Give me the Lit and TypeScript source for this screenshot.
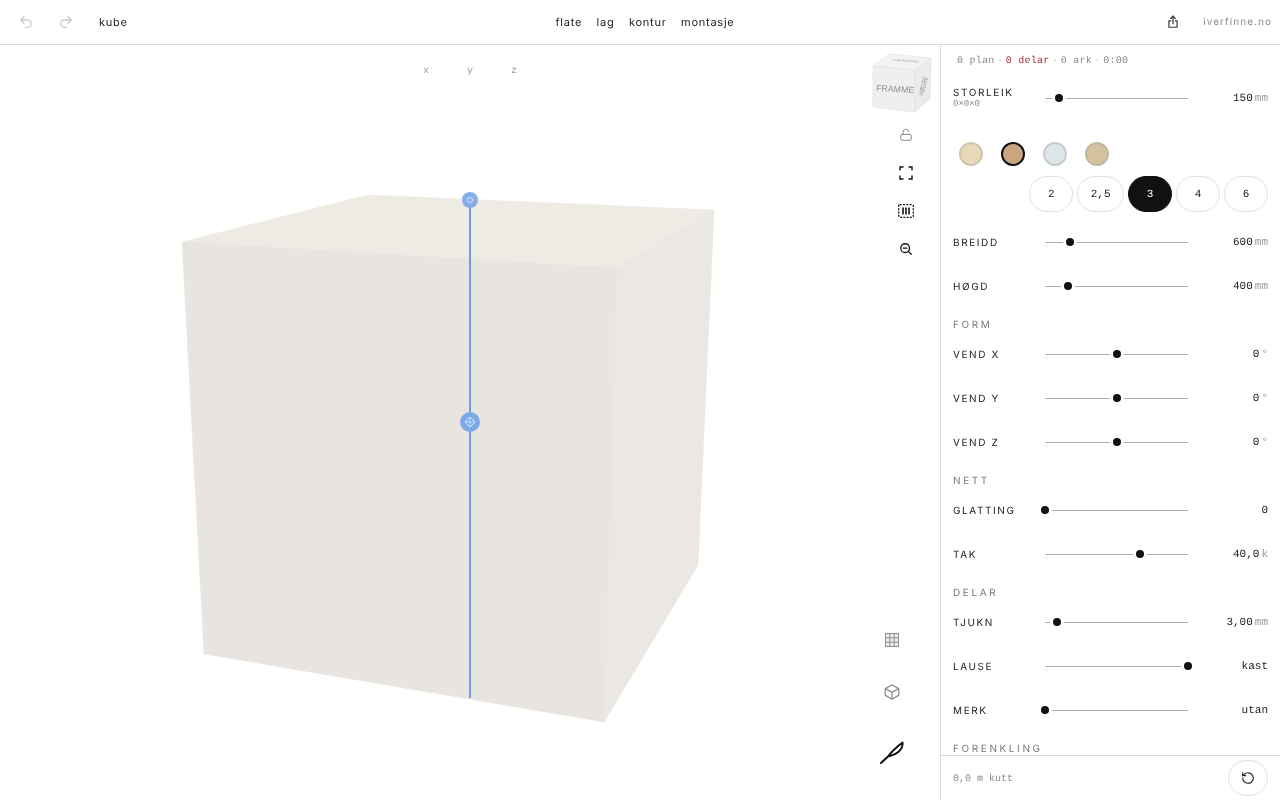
import { LitElement, html, css, svg } from "lit";
import { customElement } from "lit/decorators.js";

type Row = { kind: "row"; label: string; sub?: string; pos: number; value: string; unit?: string };
type Sec = { kind: "sec"; label: string };

const pct = (x: number) => ((x - 1045) / 143) * 100;

const rowsA: (Row | Sec)[] = [
  { kind: "row", label: "BREIDD", pos: pct(1070), value: "600", unit: "mm" },
  { kind: "row", label: "HØGD", pos: pct(1068), value: "400", unit: "mm" },
  { kind: "sec", label: "FORM" },
  { kind: "row", label: "VEND X", pos: pct(1117), value: "0", unit: "°" },
  { kind: "row", label: "VEND Y", pos: pct(1117), value: "0", unit: "°" },
  { kind: "row", label: "VEND Z", pos: pct(1117), value: "0", unit: "°" },
  { kind: "sec", label: "NETT" },
  { kind: "row", label: "GLATTING", pos: pct(1045), value: "0" },
  { kind: "row", label: "TAK", pos: pct(1140), value: "40,0", unit: "k" },
  { kind: "sec", label: "DELAR" },
  { kind: "row", label: "TJUKN", pos: pct(1057), value: "3,00", unit: "mm" },
  { kind: "row", label: "LAUSE", pos: pct(1188), value: "kast" },
  { kind: "row", label: "MERK", pos: pct(1045), value: "utan" },
  { kind: "sec", label: "FORENKLING" },
];

const swatches = [
  { c: "#e8d9b8", b: "#cfc5ae" },
  { c: "#c9a582", b: "#111111" },
  { c: "#dde6e8", b: "#c4cccd" },
  { c: "#d3c19f", b: "#c2b8a0" },
];
const pills = ["2", "2,5", "3", "4", "6"];

@customElement("app-root")
export class AppRoot extends LitElement {
  static styles = css`
    :host { display: block; width: 1280px; height: 800px; overflow: hidden; background: #fff; font-family: Inter, sans-serif; color: #111; text-rendering: geometricPrecision; will-change: transform; }
    .top { height: 44px; border-bottom: 1px solid #dcdcdc; display: grid; grid-template-columns: 1fr auto 1fr; align-items: center; padding: 0 8px 0 18px; }
    .left, .right { display: flex; align-items: center; }
    .right { justify-content: flex-end; }
    .histbtn { width: 16px; height: 16px; margin-right: 24px; color: #cccccc; display: flex; }
    .title { font-size: 11px; letter-spacing: 0.75px; margin-left: 1px; color: #222; }
    nav { display: flex; gap: 14.5px; font-size: 11px; letter-spacing: 0.75px; color: #222; }
    .share { width: 14px; height: 14px; color: #333; display: flex; margin-right: 23px; }
    .site { font-size: 10px; letter-spacing: 1.05px; color: #8a8a8a; }
    .main { display: flex; height: 755px; }
    .canvas { width: 940px; position: relative; overflow: hidden; background: #fff; }
    .scene { position: absolute; inset: 0; }
    .axes { position: absolute; top: 21px; left: 0; right: 0; display: flex; justify-content: center; font: 10px "Liberation Mono", monospace; color: #999; }
    .axes span { width: 44px; text-align: center; }
    .tools { position: absolute; top: 71px; left: 887px; display: flex; flex-direction: column; }
    .tool { width: 38px; height: 38px; display: flex; align-items: center; justify-content: center; }
    .tool.lock { color: #8a8a8a; }
    .tools2 { position: absolute; top: 569px; left: 866px; display: flex; flex-direction: column; align-items: center; }
    .t2 { width: 52px; height: 52px; display: flex; align-items: center; justify-content: center; color: #8f8f8f; }
    .t2.pen { height: 68px; color: #111; }
    .panel { width: 339px; border-left: 1px solid #dcdcdc; display: flex; flex-direction: column; }
    .body { flex: 1; overflow: hidden; padding: 0 12px 0 12px; min-height: 0; }
    .status { height: 31px; box-sizing: border-box; padding: 2px 0 0 4px; display: flex; align-items: center; font: 10px "Liberation Mono", monospace; letter-spacing: 0.25px; color: #888; gap: 2.5px; }
    .status .red { color: #a8323c; }
    .status i { font-style: normal; color: #bbb; }
    .row { height: 44px; display: flex; align-items: center; }
    .lab { width: 92px; flex: none; box-sizing: border-box; padding-top: 2px; font-size: 10px; letter-spacing: 1.6px; color: #222; line-height: 11px; }
    .lab.has-sub { padding-top: 0; }
    .sub { font: 9px "Liberation Mono", monospace; letter-spacing: 0; color: #888; line-height: 9px; margin-top: 1px; }
    .track { width: 143px; flex: none; height: 14px; position: relative; display: flex; align-items: center; }
    .line { width: 100%; height: 1px; background: #adadad; }
    .thumb { position: absolute; top: 3px; width: 8px; height: 8px; margin-left: -4px; background: #111; border-radius: 50%; box-shadow: 0 0 0 3px #fff; }
    .val { flex: 1; padding-top: 2px; display: flex; justify-content: flex-end; align-items: baseline; gap: 2px; font: 11px "Liberation Mono", monospace; color: #222; }
    .unit { color: #999; }
    .sec { height: 24px; display: flex; align-items: flex-end; font-size: 10px; line-height: 13px; letter-spacing: 2.6px; color: #777; }
    .swatches { display: flex; gap: 18px; padding: 22px 0 0 6px; }
    .sw { width: 24px; height: 24px; box-sizing: border-box; border-radius: 50%; border: 2px solid; }
    .pills { display: flex; justify-content: flex-end; gap: 4px; margin: 10px 0 8px; }
    .pill { min-width: 44px; height: 36px; box-sizing: border-box; padding: 2px 12.5px 0; display: flex; align-items: center; justify-content: center; border: 1px solid #e2e2e2; border-radius: 18px; font: 11px "Liberation Mono", monospace; color: #222; }
    .pill.on { background: #111; border-color: #111; color: #fff; }
    .foot { height: 45px; box-sizing: border-box; border-top: 1px solid #dcdcdc; display: flex; align-items: center; justify-content: space-between; padding: 0 12px; font: 10px "Liberation Mono", monospace; color: #888; }
    .foot span { padding-top: 2px; }
    .reset { width: 40px; height: 36px; box-sizing: border-box; border: 1px solid #e2e2e2; border-radius: 18px; display: flex; align-items: center; justify-content: center; color: #222; }
    svg { display: block; }
  `;

  private row(r: Row) {
    return html`<div class="row">
      <div class="lab ${r.sub ? "has-sub" : ""}">${r.label}${r.sub ? html`<div class="sub">${r.sub}</div>` : ""}</div>
      <div class="track"><div class="line"></div><div class="thumb" style="left:${r.pos}%"></div></div>
      <div class="val"><span>${r.value}</span>${r.unit ? html`<span class="unit">${r.unit}</span>` : ""}</div>
    </div>`;
  }

  private scene() {
    return svg`<svg class="scene" width="940" height="755" viewBox="0 45 940 755">
      <polygon points="182,242 368,195 714,210 617,268" fill="#eeeae4" stroke="#eeeae4" stroke-width=".6"/>
      <polygon points="617,268 714,210 698,565 604,722" fill="#ebe7e2" stroke="#ebe7e2" stroke-width=".6"/>
      <polygon points="182,242 617,268 604,722 204,654" fill="#e8e4df" stroke="#e8e4df" stroke-width=".4"/>
      <line x1="470" y1="200" x2="470" y2="698" stroke="#6f9fe3" stroke-width="2"/>
      <circle cx="470" cy="200" r="8" fill="#84ade9"/>
      <circle cx="470" cy="200" r="2.500" fill="none" stroke="#dfeafa" stroke-width="1"/>
      <circle cx="470" cy="422" r="10" fill="#7ca8e8"/>
      <path d="M470 417l5 5-5 5-5-5z" fill="none" stroke="#dfeafa" stroke-width="1"/>
      <path d="M465 422h10M470 417v10" stroke="#dfeafa" stroke-width=".7"/>
      <g font-family="Liberation Sans, sans-serif">
        <polygon points="873,66 889,54 931,58 915,70" fill="#f3f3f3" stroke="#e2e2e2" stroke-width=".7"/>
        <polygon points="873,66 915,70 915,112 873,107" fill="#efefef" stroke="#e2e2e2" stroke-width=".7"/>
        <polygon points="915,70 931,58 930,99 915,112" fill="#ebebeb" stroke="#e2e2e2" stroke-width=".7"/>
        <text transform="translate(876,91) rotate(3)" font-size="8.800" fill="#8f8f8f">FRAMME</text>
        <text transform="translate(893,61) rotate(3) scale(1,.5)" font-size="6" fill="#aaa">FRAMME</text>
        <text transform="translate(923,96) rotate(-74) scale(.75,1)" font-size="7" fill="#999">HØGRE</text>
      </g>
    </svg>`;
  }

  render() {
    return html`
      <div class="top">
        <div class="left">
          <div class="histbtn"><svg width="16" height="16" viewBox="0 0 24 24" fill="none" stroke="currentColor" stroke-width="2" stroke-linecap="round" stroke-linejoin="round"><path d="M9 14 4 9l5-5"/><path d="M4 9h10.5a5.5 5.5 0 0 1 0 11H11"/></svg></div>
          <div class="histbtn"><svg width="16" height="16" viewBox="0 0 24 24" fill="none" stroke="currentColor" stroke-width="2" stroke-linecap="round" stroke-linejoin="round"><path d="m15 14 5-5-5-5"/><path d="M20 9H9.5a5.5 5.5 0 0 0 0 11H13"/></svg></div>
          <div class="title">kube</div>
        </div>
        <nav><span>flate</span><span>lag</span><span>kontur</span><span>montasje</span></nav>
        <div class="right">
          <div class="share"><svg width="14" height="14" viewBox="0 0 24 24" fill="none" stroke="currentColor" stroke-width="2" stroke-linecap="round" stroke-linejoin="round"><path d="M8 10H5v11h14V10h-3"/><path d="M12 15V2"/><path d="m8 6 4-4 4 4"/></svg></div>
          <div class="site">iverfinne.no</div>
        </div>
      </div>
      <div class="main">
        <div class="canvas">
          ${this.scene()}
          <div class="axes"><span>x</span><span>y</span><span>z</span></div>
          <div class="tools">
            <div class="tool lock"><svg width="14" height="14" viewBox="0 0 24 24" fill="none" stroke="currentColor" stroke-width="1.7" stroke-linecap="round" stroke-linejoin="round"><rect x="3" y="11" width="18" height="10" rx="2"/><path d="M7 11V7a5 5 0 0 1 9.9-1"/></svg></div>
            <div class="tool"><svg width="14" height="14" viewBox="0 0 14 14" fill="none" stroke="#111" stroke-width="1.4"><path d="M1 4.5V1h3.5M9.500 1H13v3.500M13 9.500V13H9.500M4.500 13H1V9.500"/></svg></div>
            <div class="tool"><svg width="16" height="14" viewBox="0 0 16 14" fill="none" stroke="#111"><rect x=".7" y=".7" width="14.600" height="12.600" rx="1" stroke-width="1.300" stroke-dasharray="2 1.300"/><path d="M5 3.500v7M8 3.500v7M11 3.500v7" stroke-width="1.600"/></svg></div>
            <div class="tool"><svg width="14" height="14" viewBox="0 0 24 24" fill="none" stroke="#111" stroke-width="2.200" stroke-linecap="round"><circle cx="10.500" cy="10.500" r="7.500"/><path d="m21 21-5-5M7.500 10.500h6"/></svg></div>
          </div>
          <div class="tools2">
            <div class="t2"><svg width="14" height="14" viewBox="0 0 14 14" fill="#ececec" stroke="currentColor"><rect x=".5" y=".5" width="13" height="13"/><path d="M.5 4.800h13M.5 9.200h13M4.800 .5v13M9.200 .5v13"/></svg></div>
            <div class="t2"><svg width="18" height="18" viewBox="0 0 24 24" fill="none" stroke="currentColor" stroke-width="1.700" stroke-linejoin="round"><path d="M12 2.500 21 7.500v9l-9 5-9-5v-9z"/><path d="M3 7.500 12 12.500l9-5M12 12.500v9"/></svg></div>
            <div class="t2 pen"><svg width="24" height="24" viewBox="0 0 24 24" fill="none" stroke="currentColor" stroke-width="2" stroke-linecap="round" stroke-linejoin="round"><path d="M1 23 8 16.500C12 11 18 6 22.500 2.500 23.500 8 19 14 8 16.500"/></svg></div>
          </div>
        </div>
        <div class="panel">
          <div class="body">
            <div class="status"><span>0 plan</span><i>·</i><span class="red">0 delar</span><i>·</i><span>0 ark</span><i>·</i><span>0:00</span></div>
            ${this.row({ kind: "row", label: "STORLEIK", sub: "0×0×0", pos: pct(1059), value: "150", unit: "mm" })}
            <div class="swatches">${swatches.map((s) => html`<div class="sw" style="background:${s.c};border-color:${s.b}"></div>`)}</div>
            <div class="pills">${pills.map((p) => html`<div class="pill ${p === "3" ? "on" : ""}">${p}</div>`)}</div>
            ${rowsA.map((r) => (r.kind === "sec" ? html`<div class="sec">${r.label}</div>` : this.row(r)))}
          </div>
          <div class="foot"><span>0,0 m kutt</span><div class="reset"><svg width="14" height="14" viewBox="0 0 24 24" fill="none" stroke="currentColor" stroke-width="2" stroke-linecap="round" stroke-linejoin="round"><path d="M3 12a9 9 0 1 0 3-6.700L3 8"/><path d="M3 3v5h5"/></svg></div></div>
        </div>
      </div>
    `;
  }
}
